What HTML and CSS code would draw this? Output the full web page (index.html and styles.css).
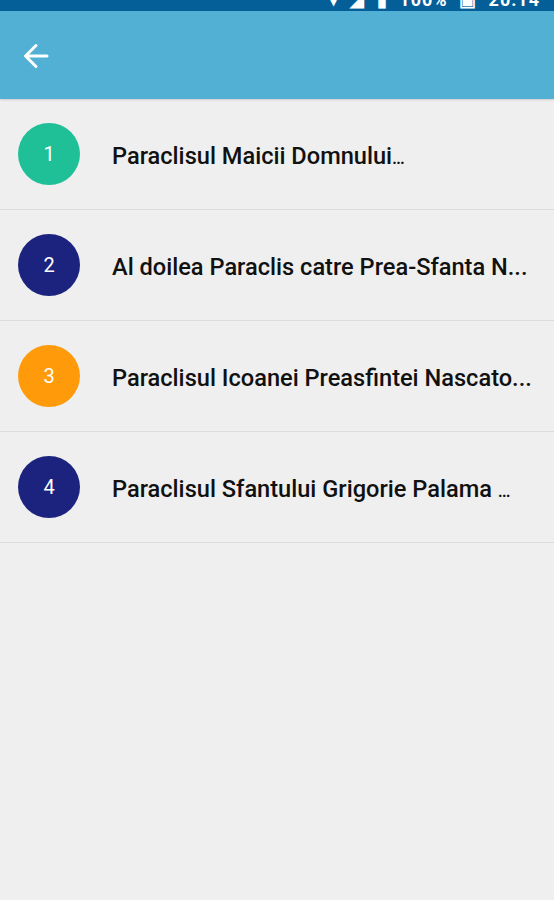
FILE: index.html
```html
<!DOCTYPE html>
<html lang="ro">
<head>
  <meta charset="UTF-8">
  <meta name="viewport" content="width=device-width, initial-scale=1.0">
  <title>Paraclise</title>
  <link rel="stylesheet" href="styles.css">
</head>
<body>

  <div class="status-bar">
    <span class="status-text">▾ ◢ ▮ 100% ▣ 20:14</span>
  </div>

  <header class="toolbar">
    <button class="back-btn" aria-label="Inapoi">
      <svg width="26" height="26" viewBox="0 0 26 26">
        <path d="M24 13H3M13 2.5L2.5 13L13 23.5" fill="none" stroke="#fff" stroke-width="3" stroke-linecap="round" stroke-linejoin="round"/>
      </svg>
    </button>
  </header>

  <ul class="list">
    <li class="item">
      <span class="badge green">1</span>
      <span class="title">Paraclisul Maicii Domnului<span class="dots">…</span></span>
    </li>
    <li class="item">
      <span class="badge navy">2</span>
      <span class="title">Al doilea Paraclis catre Prea-Sfanta N...</span>
    </li>
    <li class="item">
      <span class="badge orange">3</span>
      <span class="title">Paraclisul Icoanei Preasfintei Nascato...</span>
    </li>
    <li class="item">
      <span class="badge navy">4</span>
      <span class="title">Paraclisul Sfantului Grigorie Palama <span class="dots">…</span></span>
    </li>
  </ul>

</body>
</html>
```

FILE: styles.css
```css
body {
  margin: 0;
  padding: 0;
  background-color: #efefef;
  font-family: Roboto, 'Noto Sans', sans-serif;
}

/* Status bar, cut off at the top */
.status-bar {
  height: 11px;
  background-color: #045e98;
  overflow: hidden;
  display: flex;
  justify-content: flex-end;
  padding-right: 14px;
}

.status-text {
  color: #fff;
  font-size: 18px;
  font-weight: 700;
  line-height: 14px;
  margin-top: -7px;
  letter-spacing: 1px;
  word-spacing: 6px;
}

.toolbar {
  height: 88px;
  background-color: #51b0d4;
  display: flex;
  align-items: center;
  padding-left: 23px;
  box-shadow: 0 1px 2px rgba(0, 0, 0, 0.15);
}

.back-btn {
  background: none;
  border: none;
  padding: 0;
  margin-top: 2px;
  display: flex;
}

.list {
  list-style: none;
  margin: 0;
  padding: 0;
}

.item {
  height: 110px;
  display: flex;
  align-items: center;
  padding: 0 20px 0 18px;
  border-bottom: 1px solid #dcdcdc;
}

.badge {
  flex: none;
  width: 62px;
  height: 62px;
  border-radius: 50%;
  color: #fff;
  font-size: 20px;
  display: flex;
  align-items: center;
  justify-content: center;
  margin-right: 32px;
}

.green { background-color: #1fbf98; }
.navy { background-color: #1b237e; }
.orange { background-color: #ff9b0b; }

.title {
  flex: 1;
  min-width: 0;
  font-size: 23.6px;
  font-weight: 500;
  color: #111;
  white-space: nowrap;
  padding-top: 3px;
}

.dots {
  font-size: 18px;
}
```
